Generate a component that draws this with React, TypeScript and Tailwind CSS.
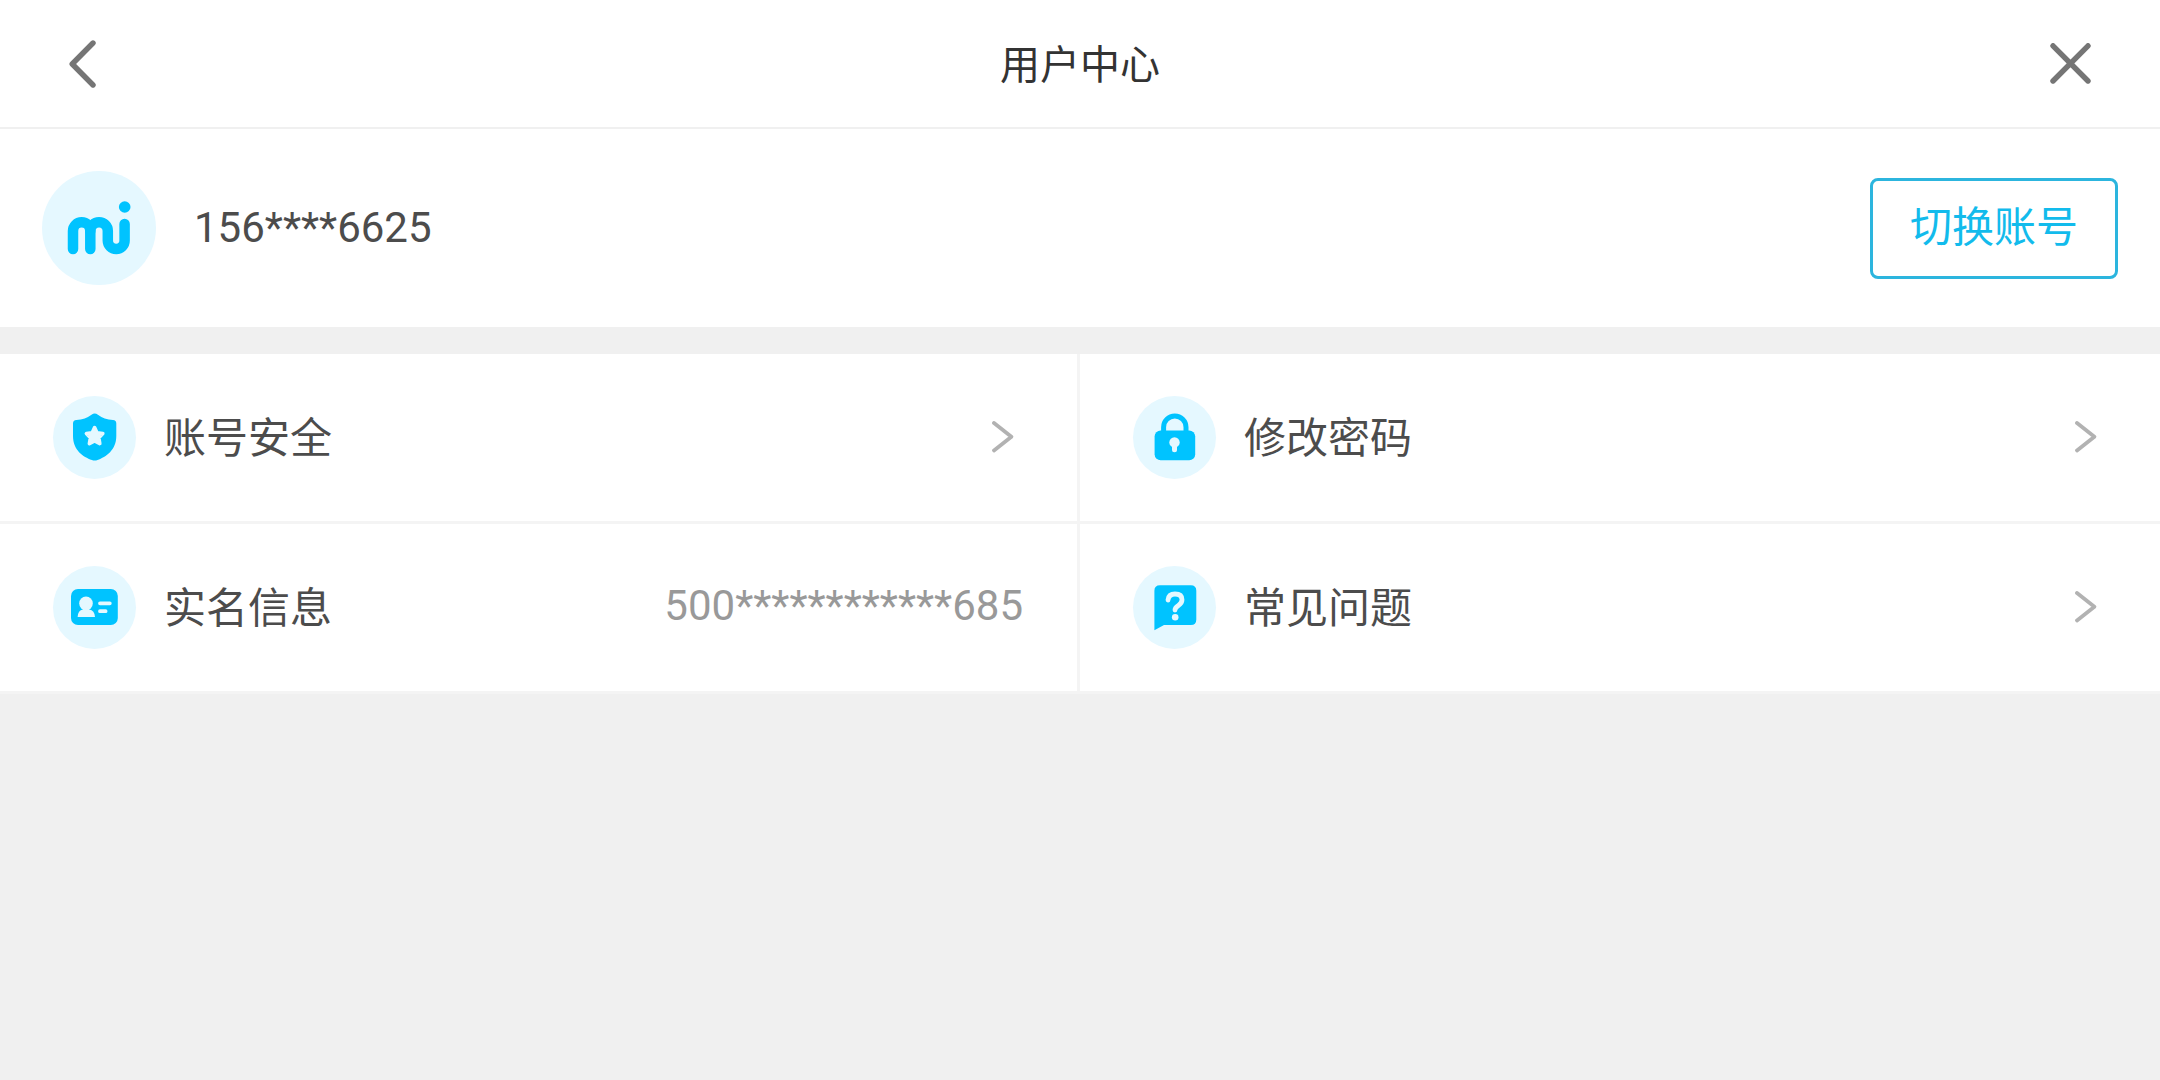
import type { ReactNode } from "react";

interface MenuItem {
  label: string;
  icon: ReactNode;
  href?: string;
  value?: string;
}

function BackIcon() {
  return (
    <svg viewBox="0 0 28 48" className="w-7 h-12" fill="none" stroke="#757575" strokeWidth="5.4" strokeLinecap="round" strokeLinejoin="round" aria-hidden="true">
      <path d="M25 3 L4.2 24 L25 45" />
    </svg>
  );
}

function CloseIcon() {
  return (
    <svg viewBox="0 0 42 42" className="w-[42px] h-[42px]" fill="none" stroke="#757575" strokeWidth="5.4" strokeLinecap="round" aria-hidden="true">
      <path d="M3 2.8 L38 38 M38 2.8 L3 38" />
    </svg>
  );
}

function ArrowIcon() {
  return (
    <svg viewBox="0 0 22 34" className="w-[22px] h-[34px]" fill="none" stroke="#b2b2b2" strokeWidth="3.8" strokeLinecap="round" strokeLinejoin="round" aria-hidden="true">
      <path d="M2 2 L19.4 15.7 L2 29.4" />
    </svg>
  );
}

function MiLogo() {
  return (
    <svg viewBox="0 0 114 114" className="w-full h-full" fill="none" aria-hidden="true">
      <g stroke="#00c3ff" strokeWidth="10.5" strokeLinecap="round" strokeLinejoin="round">
        <path d="M31 78 V60 a8.65 8.65 0 0 1 17.3 0 V78" />
        <path d="M48.3 60 a8.75 8.75 0 0 1 17.5 0 V69.5 a8.4 8.4 0 0 0 16.8 0 V53" />
      </g>
      <circle cx="82.7" cy="36" r="5.8" fill="#00c3ff" />
    </svg>
  );
}

function ShieldIcon() {
  return (
    <svg viewBox="0 0 83 83" className="w-full h-full" aria-hidden="true">
      <path
        fill="#00c3ff"
        d="M38.5 18.8 Q41.7 16 44.9 18.8 Q51 23.5 60 24 Q63.3 24.2 63.3 27.5 V40 C63.3 54 53 61 44.5 64 Q41.7 65 38.9 64 C30 61 20 54 20 40 V27.5 Q20 24.2 23.4 24 Q32.4 23.5 38.5 18.8 Z"
      />
      <path
        fill="#e5f8ff"
        stroke="#e5f8ff"
        strokeWidth="3.6"
        strokeLinejoin="round"
        d="M41.6 31.6 L44.1 36.9 L49.8 37.6 L45.8 41.8 L46.8 47.6 L41.6 45 L36.4 47.6 L37.4 41.8 L33.4 37.6 L39.1 36.9 Z"
      />
    </svg>
  );
}

function LockIcon() {
  return (
    <svg viewBox="0 0 83 83" className="w-full h-full" aria-hidden="true">
      <path d="M30.6 37 V31.2 a11.2 11.2 0 0 1 22.4 0 V37" fill="none" stroke="#00c3ff" strokeWidth="5" />
      <rect x="21.6" y="34.6" width="40.6" height="29.6" rx="6" fill="#00c3ff" />
      <circle cx="41.5" cy="46.4" r="5.2" fill="#e5f8ff" />
      <path d="M41.5 47 V53.8" stroke="#e5f8ff" strokeWidth="5" strokeLinecap="round" />
    </svg>
  );
}

function IdCardIcon() {
  return (
    <svg viewBox="0 0 83 83" className="w-full h-full" aria-hidden="true">
      <rect x="18" y="23" width="46.8" height="36" rx="7" fill="#00c3ff" />
      <g fill="#e5f8ff">
        <circle cx="33" cy="37.4" r="6.8" />
        <path d="M29.8 41 H36.2 V43.6 Q41.6 44.6 42 51 H24.6 Q25 44.6 29.8 43.6 Z" />
      </g>
      <path d="M47 37.3 H56.8 M47 45.2 H52.6" stroke="#e5f8ff" strokeWidth="3.8" strokeLinecap="round" />
    </svg>
  );
}

function QuestionIcon() {
  return (
    <svg viewBox="0 0 83 83" className="w-full h-full" aria-hidden="true">
      <path d="M27 19.2 H57.8 Q63.3 19.2 63.3 24.7 V53.5 Q63.3 59 57.8 59 H31 L21.4 64.2 V24.7 Q21.4 19.2 27 19.2 Z" fill="#00c3ff" />
      <path
        d="M35 34 Q35.6 28 42 28 Q49 28 49 33.8 Q49 37 45.4 39.4 Q42 41.6 42 44"
        fill="none"
        stroke="#e5f8ff"
        strokeWidth="4.8"
        strokeLinecap="round"
      />
      <circle cx="42.2" cy="51.2" r="3.3" fill="#e5f8ff" />
    </svg>
  );
}

const MENU: MenuItem[] = [
  { label: "账号安全", icon: <ShieldIcon />, href: "#security" },
  { label: "修改密码", icon: <LockIcon />, href: "#password" },
  { label: "实名信息", icon: <IdCardIcon />, value: "500************685" },
  { label: "常见问题", icon: <QuestionIcon />, href: "#faq" },
];

function MenuCell({ item }: { item: MenuItem }) {
  const cell = "flex items-center h-[170px] pl-[53px] border-b-[3px] border-[#f4f4f4] bg-white odd:border-r-[3px]";
  const content = (
    <>
      <span className="shrink-0 w-[83px] h-[83px] rounded-full bg-[#e5f8ff]">{item.icon}</span>
      <span className="flex-1 ml-7 pt-[3px] text-[42px] leading-[60px] text-[#4c4c4c]">{item.label}</span>
    </>
  );

  if (item.href) {
    return (
      <a href={item.href} className={`${cell} pr-[63px]`}>
        {content}
        <ArrowIcon />
      </a>
    );
  }

  return (
    <div className={`${cell} pr-[54px]`}>
      {content}
      <span className="pb-[3px] text-[42px] leading-[60px] text-[#999999]">{item.value}</span>
    </div>
  );
}

export default function App() {
  return (
    <div className="min-h-screen bg-[#f0f0f0] font-[Roboto,'Noto_Sans_CJK_SC',sans-serif]">
      <header className="flex items-center justify-between h-[129px] px-[68px] bg-white border-b-2 border-[#f0f0f0]">
        <button type="button" aria-label="返回" className="flex w-[42px]">
          <BackIcon />
        </button>
        <h1 className="pt-1 text-[40px] leading-[60px] text-[#333333]">用户中心</h1>
        <button type="button" aria-label="关闭" className="flex">
          <CloseIcon />
        </button>
      </header>

      <main>
        <section className="flex items-center h-[198px] px-[42px] bg-white">
          <div className="shrink-0 w-[114px] h-[114px] rounded-full bg-[#e5f8ff]">
            <MiLogo />
          </div>
          <p className="flex-1 ml-[38px] text-[42px] leading-[60px] text-[#4c4c4c]">156****6625</p>
          <button type="button" className="px-[37px] h-[101px] border-[3px] border-[#2cb5de] rounded-lg text-[42px] leading-[60px] text-[#12bbec]">
            切换账号
          </button>
        </section>

        <nav className="grid grid-cols-2 mt-[27px]">
          {MENU.map((item) => (
            <MenuCell key={item.label} item={item} />
          ))}
        </nav>
      </main>
    </div>
  );
}
